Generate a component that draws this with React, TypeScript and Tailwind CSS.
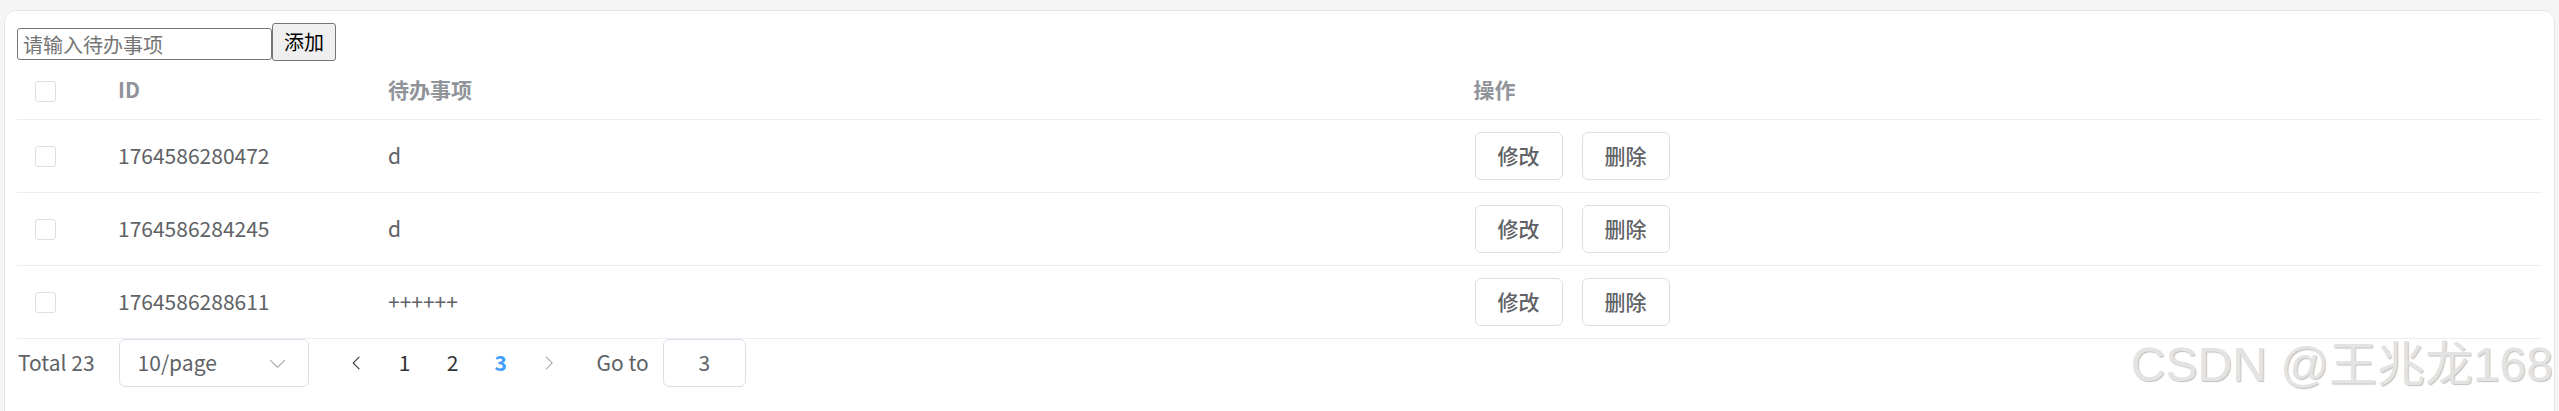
import { useState } from 'react';

const rows = [
  { id: '1764586280472', title: 'd' },
  { id: '1764586284245', title: 'd' },
  { id: '1764586288611', title: '++++++' },
];

function ArrowLeft({ className }: { className?: string }) {
  return (
    <svg viewBox="0 0 1024 1024" className={className} fill="currentColor">
      <path d="M609.408 149.376 277.76 489.6a32 32 0 0 0 0 44.672l331.648 340.352a29.12 29.12 0 0 0 41.728 0 30.592 30.592 0 0 0 0-42.752L339.264 511.936l311.872-319.872a30.592 30.592 0 0 0 0-42.688 29.12 29.12 0 0 0-41.728 0z" />
    </svg>
  );
}

function ArrowRight({ className }: { className?: string }) {
  return (
    <svg viewBox="0 0 1024 1024" className={className} fill="currentColor">
      <path d="M340.864 149.312a30.592 30.592 0 0 0 0 42.752L652.736 512 340.864 831.872a30.592 30.592 0 0 0 0 42.752 29.12 29.12 0 0 0 41.728 0L714.24 534.336a32 32 0 0 0 0-44.672L382.592 149.376a29.12 29.12 0 0 0-41.728 0z" />
    </svg>
  );
}

function ArrowDown({ className }: { className?: string }) {
  return (
    <svg viewBox="0 0 1024 1024" className={className} fill="currentColor">
      <path d="M831.872 340.864 512 652.672 192.128 340.864a30.592 30.592 0 0 0-42.752 0 29.12 29.12 0 0 0 0 41.6L489.664 714.24a32 32 0 0 0 44.672 0l340.288-331.712a29.12 29.12 0 0 0 0-41.728 30.592 30.592 0 0 0-42.752 0z" />
    </svg>
  );
}

function Checkbox() {
  return <span className="block w-[21px] h-[21px] border border-[#dcdfe6] rounded-[3px] bg-white" />;
}

export default function App() {
  const [text, setText] = useState('');

  return (
    <div className="relative w-full h-[411px] overflow-hidden bg-[#f5f5f5] pt-[10px] pl-[4px] pr-[4px] font-['Noto_Sans_CJK_SC',sans-serif]">
      <div className="h-[420px] bg-white border border-[#e6e6e6] rounded-t-[12px] px-[12px] pt-[12px]">
        {/* add form */}
        <div className="flex items-end h-[38px]">
          <input
            value={text}
            onChange={(e) => setText(e.target.value)}
            placeholder="请输入待办事项"
            className="w-[255px] h-[32px] mb-[1px] border border-[#767676] rounded-[3px] px-[5px] text-[20px] text-black placeholder:text-[#757575] outline-none font-['Noto_Sans_CJK_SC',sans-serif]"
          />
          <button className="w-[64px] h-[38px] bg-[#efefef] border border-[#767676] rounded-[3px] text-[20px] text-black leading-none">
            添加
          </button>
        </div>

        {/* table */}
        <div className="text-[21px]">
          <div className="grid grid-cols-[84px_270px_1fr_1fr] h-[59px] items-center border-b border-[#ebeef5] text-[#909399] font-bold">
            <div className="px-[18px] pt-[2px]">
              <Checkbox />
            </div>
            <div className="pl-[17px] pr-[18px]">ID</div>
            <div className="pl-[17px] pr-[18px]">待办事项</div>
            <div className="pl-[17px] pr-[18px]">操作</div>
          </div>
          {rows.map((r) => (
            <div
              key={r.id}
              className="grid grid-cols-[84px_270px_1fr_1fr] h-[73px] items-center border-b border-[#ebeef5] text-[#606266]"
            >
              <div className="px-[18px]">
                <Checkbox />
              </div>
              <div className="pl-[17px] pr-[18px]">{r.id}</div>
              <div className="pl-[17px] pr-[18px]">{r.title}</div>
              <div className="px-[18px] flex gap-[19px]">
                <button className="w-[88px] h-[48px] border border-[#dcdfe6] rounded-[6px] bg-white text-[#606266] font-medium">
                  修改
                </button>
                <button className="w-[88px] h-[48px] border border-[#dcdfe6] rounded-[6px] bg-white text-[#606266] font-medium">
                  删除
                </button>
              </div>
            </div>
          ))}
        </div>

        {/* pagination */}
        <div className="flex items-center h-[48px] text-[21px] text-[#606266]">
          <span className="mr-[24px] pl-[1px]">Total 23</span>
          <div className="w-[190px] h-[48px] border border-[#dcdfe6] rounded-[6px] flex items-center justify-between pl-[18px] pr-[20px] mr-[24px]">
            <span>10/page</span>
            <ArrowDown className="w-[21px] h-[21px] text-[#a8abb2]" />
          </div>
          <div className="flex items-center">
            <span className="w-[48px] h-[48px] flex items-center justify-center text-[#303133]">
              <ArrowLeft className="w-[18px] h-[18px]" />
            </span>
            <span className="w-[48px] h-[48px] flex items-center justify-center text-[#303133]">1</span>
            <span className="w-[48px] h-[48px] flex items-center justify-center text-[#303133]">2</span>
            <span className="w-[48px] h-[48px] flex items-center justify-center text-[#409eff] font-bold">3</span>
            <span className="w-[48px] h-[48px] flex items-center justify-center text-[#a8abb2]">
              <ArrowRight className="w-[18px] h-[18px]" />
            </span>
          </div>
          <span className="ml-[24px]">Go to</span>
          <div className="ml-[14px] w-[83px] h-[48px] border border-[#dcdfe6] rounded-[6px] flex items-center justify-center">
            3
          </div>
        </div>
      </div>

      {/* watermark */}
      <div className="absolute right-[6px] top-[341px] text-[48px] leading-none text-[#e3e3e3] [text-shadow:1px_1px_1px_rgba(0,0,0,0.25)] font-['Liberation_Sans','Noto_Sans_CJK_SC',sans-serif] whitespace-nowrap pointer-events-none">
        CSDN @王兆龙168
      </div>
    </div>
  );
}
